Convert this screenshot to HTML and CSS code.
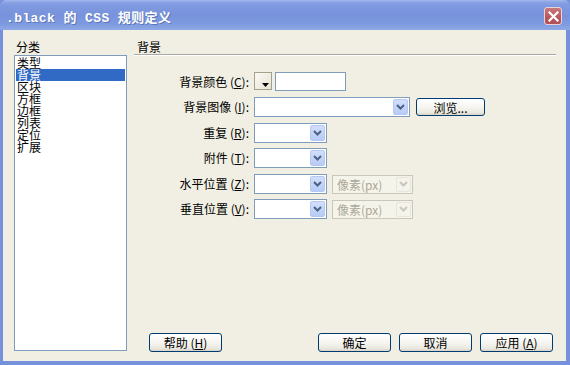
FILE: index.html
```html
<!DOCTYPE html>
<html lang="zh-CN">
<head>
<meta charset="utf-8">
<title>.black 的 CSS 规则定义</title>
<link rel="stylesheet" href="styles.css">
</head>
<body>
<div class="window">
  <div class="titlebar">
    <span class="title">.black 的 CSS 规则定义</span>
    <span class="close"><svg width="11" height="11" viewBox="0 0 11 11"><path d="M1.5 1.5 L9.5 9.5 M9.5 1.5 L1.5 9.5" stroke="#fff" stroke-width="2.2" stroke-linecap="square"/></svg></span>
  </div>
  <div class="client">
    <div class="left">
      <div class="cap">分类</div>
      <ul class="listbox">
        <li>类型</li>
        <li class="sel">背景</li>
        <li>区块</li>
        <li>方框</li>
        <li>边框</li>
        <li>列表</li>
        <li>定位</li>
        <li>扩展</li>
      </ul>
    </div>
    <div class="right">
      <div class="section">背景</div>
      <div class="form">
        <div class="lbl">背景颜色 (<u>C</u>):</div>
        <div class="ctl">
          <span class="swatch"><svg width="7" height="4" viewBox="0 0 7 4"><path d="M0 0 H7 L3.5 4 Z" fill="#000"/></svg></span>
          <span class="input w71"></span>
        </div>
        <div class="lbl">背景图像 (<u>I</u>):</div>
        <div class="ctl">
          <span class="select w156"><span class="arrow"><svg width="9" height="6" viewBox="0 0 9 6"><path d="M1 1 L4.5 4.5 L8 1" fill="none" stroke="#4D6185" stroke-width="2"/></svg></span></span>
          <span class="btn browse">浏览...</span>
        </div>
        <div class="lbl">重复 (<u>R</u>):</div>
        <div class="ctl">
          <span class="select w73"><span class="arrow"><svg width="9" height="6" viewBox="0 0 9 6"><path d="M1 1 L4.5 4.5 L8 1" fill="none" stroke="#4D6185" stroke-width="2"/></svg></span></span>
        </div>
        <div class="lbl">附件 (<u>T</u>):</div>
        <div class="ctl">
          <span class="select w73"><span class="arrow"><svg width="9" height="6" viewBox="0 0 9 6"><path d="M1 1 L4.5 4.5 L8 1" fill="none" stroke="#4D6185" stroke-width="2"/></svg></span></span>
        </div>
        <div class="lbl">水平位置 (<u>Z</u>):</div>
        <div class="ctl">
          <span class="select w73"><span class="arrow"><svg width="9" height="6" viewBox="0 0 9 6"><path d="M1 1 L4.5 4.5 L8 1" fill="none" stroke="#4D6185" stroke-width="2"/></svg></span></span>
          <span class="select disabled w81"><span class="val">像素(px)</span><span class="arrow"><svg width="9" height="6" viewBox="0 0 9 6"><path d="M1 1 L4.5 4.5 L8 1" fill="none" stroke="#C9C7BA" stroke-width="2"/></svg></span></span>
        </div>
        <div class="lbl">垂直位置 (<u>V</u>):</div>
        <div class="ctl">
          <span class="select w73"><span class="arrow"><svg width="9" height="6" viewBox="0 0 9 6"><path d="M1 1 L4.5 4.5 L8 1" fill="none" stroke="#4D6185" stroke-width="2"/></svg></span></span>
          <span class="select disabled w81"><span class="val">像素(px)</span><span class="arrow"><svg width="9" height="6" viewBox="0 0 9 6"><path d="M1 1 L4.5 4.5 L8 1" fill="none" stroke="#C9C7BA" stroke-width="2"/></svg></span></span>
        </div>
      </div>
      <div class="buttons">
        <span class="btn">帮助 (<u>H</u>)</span>
        <span class="spacer"></span>
        <span class="btn">确定</span>
        <span class="btn">取消</span>
        <span class="btn">应用 (<u>A</u>)</span>
      </div>
    </div>
  </div>
</div>
</body>
</html>
```

FILE: styles.css
```css
* { box-sizing: border-box; }
html, body { margin: 0; padding: 0; }
body {
  width: 570px;
  height: 365px;
  font-family: "Noto Sans CJK SC", "Liberation Sans", sans-serif;
  font-size: 12px;
  color: #000;
  overflow: hidden;
}
.window {
  width: 570px;
  height: 365px;
  display: flex;
  flex-direction: column;
  background: #7591DB;
}
.titlebar {
  height: 30px;
  flex: none;
  display: flex;
  align-items: center;
  padding: 3px 8px 0 6px;
  background: linear-gradient(#A4B9EC 0px, #8CA5E6 2px, #7E99DF 5px, #7893DC 16px, #7E9ADF 24px, #8FA9E6 30px);
  border-radius: 6px 6px 0 0;
}
.title {
  flex: 1;
  font-family: "Liberation Mono", "Noto Sans CJK SC", monospace;
  font-weight: bold;
  font-size: 13px;
  color: #fff;
  letter-spacing: 0.4px;
  text-shadow: 1px 1px 0 #5E77B8;
}
.close {
  width: 18px;
  height: 18px;
  margin-top: -1px;
  display: flex;
  align-items: center;
  justify-content: center;
  border: 1px solid #E7D3D8;
  border-radius: 3px;
  background: linear-gradient(#C9787C, #B8575E 60%, #B15058);
}
.client {
  flex: 1;
  margin: 0 4px 4px 3px;
  background: #F1EFE3;
  display: flex;
  padding-top: 10px;
}
.left {
  margin-left: 11px;
  width: 113px;
  display: flex;
  flex-direction: column;
}
.cap {
  height: 15px;
  line-height: 14px;
  padding-left: 2px;
}
.listbox {
  list-style: none;
  margin: 0;
  padding: 1px 0 0 0;
  height: 296px;
  border: 1px solid #7F9DB9;
  background: #fff;
}
.listbox li {
  height: 12px;
  line-height: 12px;
  margin: 0 1px;
  padding-left: 1px;
}
.listbox li.sel {
  background: #316AC5;
  color: #fff;
}
.right {
  margin-left: 7px;
  width: 422px;
  display: flex;
  flex-direction: column;
}
.section {
  height: 15px;
  line-height: 13px;
  padding-left: 3px;
  border-bottom: 1px solid #A9A8A2;
  box-shadow: 0 1px 0 #fff;
}
.form {
  margin-top: 17px;
  display: grid;
  grid-template-columns: 115px 302px;
  column-gap: 5px;
  row-gap: 5.4px;
  grid-auto-rows: 20px;
}
.lbl {
  text-align: right;
  line-height: 20px;
  white-space: nowrap;
}
.ctl {
  display: flex;
  align-items: flex-start;
}
.ctl > * { flex: none; }
u { text-decoration: underline; text-underline-offset: 1px; }
.swatch {
  width: 18px;
  height: 18px;
  border: 1px solid #A3A08C;
  background: linear-gradient(135deg, #FBFAF4, #E6E3D2);
  display: flex;
  align-items: flex-end;
  justify-content: flex-end;
  padding: 0 2px 2px 0;
  margin-right: 3px;
}
.input {
  height: 19px;
  border: 1px solid #7F9DB9;
  background: #fff;
}
.w71 { width: 71px; }
.w73 { width: 73px; }
.w81 { width: 81px; }
.w156 { width: 156px; }
.select {
  height: 20px;
  border: 1px solid #7F9DB9;
  background: #fff;
  display: flex;
  justify-content: space-between;
  padding: 1px;
}
.select.disabled {
  margin-left: 5px;
  border-color: #C9C7BA;
  background: #F5F4EA;
  color: #ACA899;
  height: 19px;
  margin-top: 1px;
}
.val { line-height: 16px; padding-left: 3px; }
.arrow {
  margin-left: auto;
  width: 15px;
  height: 100%;
  border-radius: 2px;
  border: 1px solid #B5C8F3;
  background: linear-gradient(#D2DEFB, #B8CBF6);
  display: flex;
  align-items: center;
  justify-content: center;
}
.select.disabled .arrow {
  border-color: #E8E6DC;
  background: #F4F3EC;
}
.btn {
  height: 19px;
  border: 1px solid #003C74;
  border-radius: 3px;
  background: linear-gradient(#FFFFFF, #F6F5F0 50%, #EAE8DF 85%, #D8D3C6);
  display: flex;
  align-items: center;
  justify-content: center;
  line-height: 17px;
  white-space: nowrap;
}
.browse {
  width: 69px;
  margin-left: 6px;
  margin-top: 1px;
  height: 18px;
}
.buttons {
  margin-top: auto;
  margin-bottom: 9px;
  display: flex;
  padding: 0 3px 0 15px;
  gap: 8px;
}
.buttons .btn { width: 73px; flex: none; }
.spacer { flex: 1; }
```
